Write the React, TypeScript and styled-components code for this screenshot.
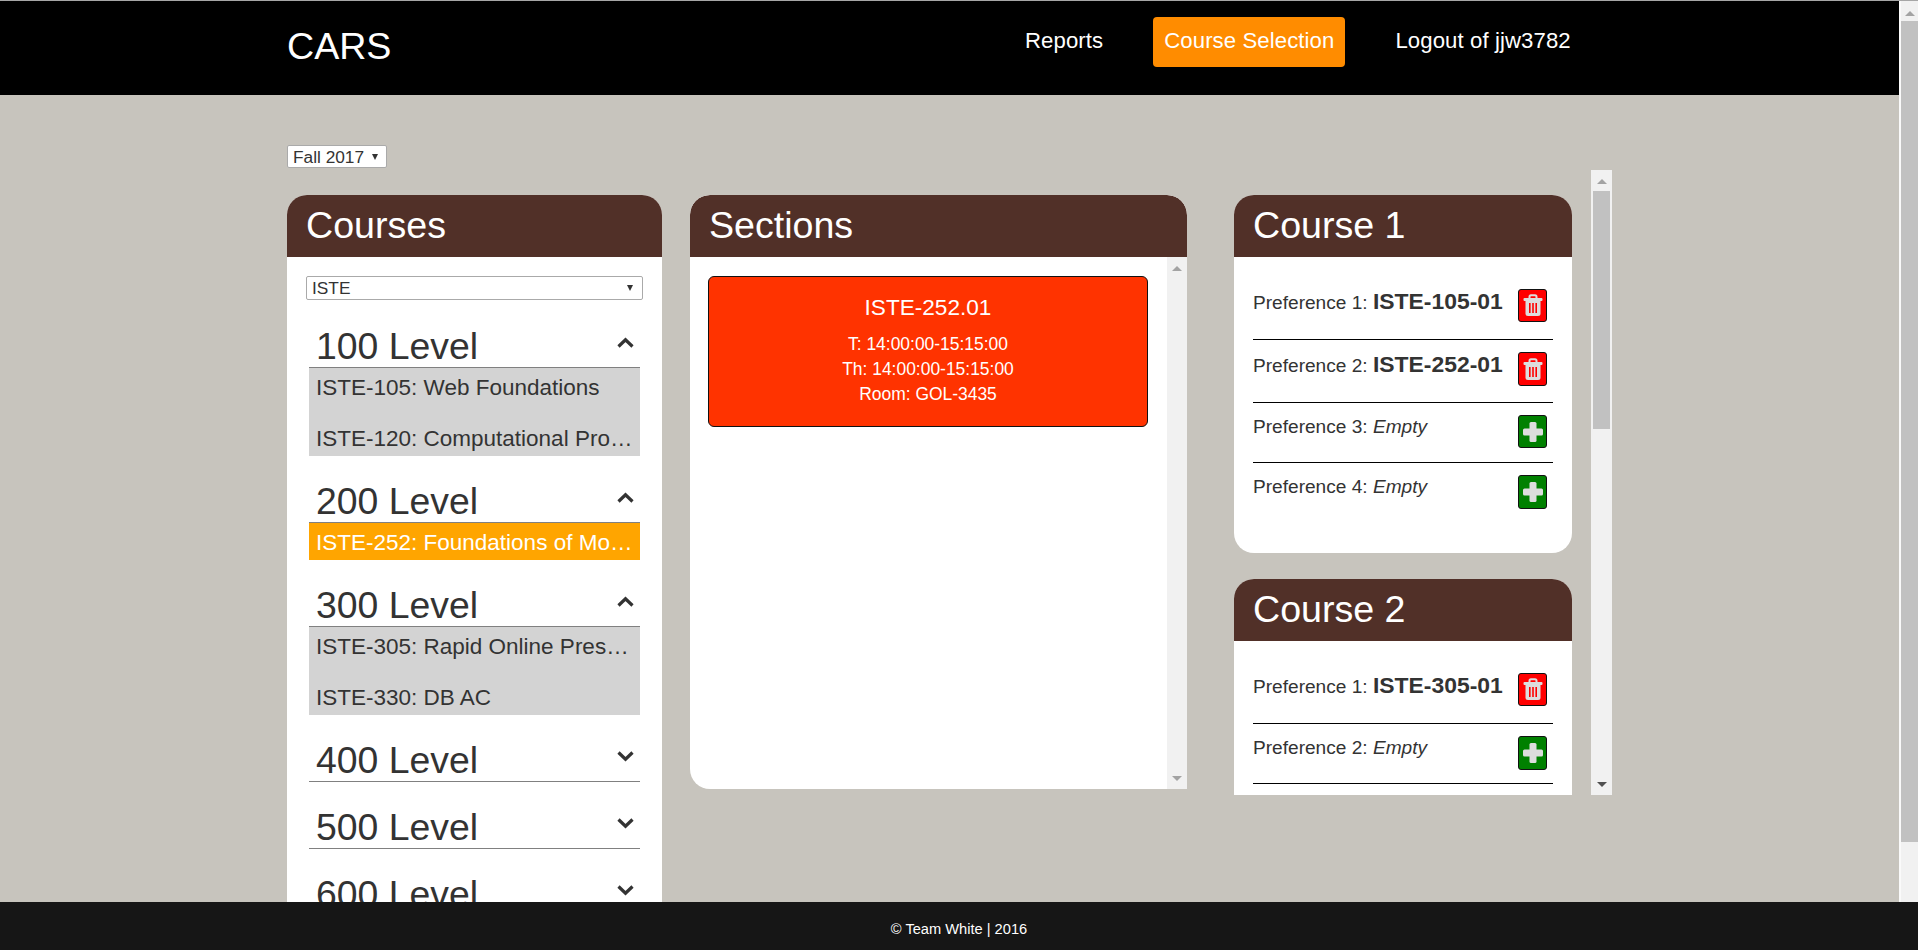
import React from "react";
import styled, { createGlobalStyle } from "styled-components";

const Global = createGlobalStyle`
  html, body { margin: 0; padding: 0; height: 100%; overflow: hidden; background: #c7c4bd; }
  * { box-sizing: border-box; }
  body { font-family: "Liberation Sans", Arial, sans-serif; color: #333; }
`;

const Frame = styled.div`
  height: 950px;
  overflow: hidden;
  display: flex;
  border-top: 1px solid #a6a6a6;
  background: #c7c4bd;
`;
const Main = styled.div`
  flex: 1;
  min-width: 0;
  display: flex;
  flex-direction: column;
`;
const Header = styled.header`
  height: 94px;
  flex: none;
  background: #000;
  color: #fff;
  display: flex;
  align-items: flex-start;
  padding-left: 287px;
`;
const Brand = styled.div`
  width: 727px;
  font-size: 37.6px;
  line-height: 42px;
  padding-top: 24px;
`;
const Nav = styled.nav`
  display: flex;
  gap: 39px;
  padding-top: 16px;
`;
const NavItem = styled.a<{ $active?: boolean }>`
  height: 50px;
  padding: 11px 11px 0;
  font-size: 22.15px;
  line-height: 26px;
  letter-spacing: 0.1px;
  border-radius: 4px;
  color: #fff;
  background: ${(p) => (p.$active ? "#ff8c00" : "transparent")};
`;
const Content = styled.main`
  flex: 1;
  min-height: 0;
  padding: 50px 0 0 287px;
  display: grid;
  grid-template-columns: 375px 497px 397px;
  column-gap: 28px;
  grid-template-rows: 25px 25px 1fr;
  justify-content: start;
`;
const TermRow = styled.div`
  grid-column: 1 / 3;
  grid-row: 1;
`;
const Picker = styled.div<{ $wide?: boolean }>`
  position: relative;
  width: ${(p) => (p.$wide ? "337px" : "100px")};
  height: ${(p) => (p.$wide ? "24px" : "23px")};
  padding-left: 5px;
  background: #fff;
  border: 1px solid #aaa;
  border-radius: 2px;
  font-size: 17.3px;
  line-height: 23px;
  color: #333;
  &::after {
    content: "";
    position: absolute;
    right: ${(p) => (p.$wide ? "9px" : "8px")};
    top: 8px;
    border-left: 3.5px solid transparent;
    border-right: 3.5px solid transparent;
    border-top: 6px solid #333;
  }
`;
const CoursesPanel = styled.section`
  grid-column: 1;
  grid-row: 3;
  background: #fff;
  border-radius: 20px 20px 0 0;
  min-height: 900px;
`;
const SectionsPanel = styled.section`
  grid-column: 2;
  grid-row: 3;
  height: 594px;
  display: flex;
  flex-direction: column;
  background: #fff;
  border-radius: 20px 20px 0 20px;
  overflow: hidden;
`;
const PanelTitle = styled.h2`
  margin: 0;
  height: 62px;
  flex: none;
  background: #513028;
  color: #fff;
  font-size: 37.6px;
  font-weight: 400;
  line-height: 61px;
  padding-left: 19px;
  border-radius: 20px 20px 0 0;
`;
const CoursesBody = styled.div`
  padding: 19px 19px 0;
`;
const LevelList = styled.div`
  padding: 1px 3px 0 3px;
`;
const LevelHead = styled.div`
  height: 67px;
  display: flex;
  justify-content: space-between;
  align-items: flex-end;
  border-bottom: 1px solid #808080;
  padding: 0 6px 0 7px;
  font-size: 37.4px;
  line-height: 41px;
  color: #333;
`;
const Chevron = styled.svg`
  width: 17px;
  height: 11px;
  align-self: flex-start;
  margin-top: 36px;
  fill: none;
  stroke: #333;
  stroke-width: 3.2;
`;
const Items = styled.div`
  display: flex;
  flex-direction: column;
  gap: 14px;
  background: #d3d3d3;
`;
const Item = styled.div<{ $selected?: boolean }>`
  height: 37px;
  padding: 0 7px;
  font-size: 22.5px;
  line-height: 39px;
  white-space: nowrap;
  overflow: hidden;
  text-overflow: ellipsis;
  background: ${(p) => (p.$selected ? "#ffa500" : "#d3d3d3")};
  color: ${(p) => (p.$selected ? "#fff" : "#333")};
`;
const SectionsBody = styled.div`
  flex: 1;
  min-height: 0;
  display: flex;
`;
const SectionList = styled.div`
  flex: 1;
  padding: 19px 19px 0 18px;
`;
const SectionCard = styled.div`
  height: 151px;
  background: #ff3300;
  border: 1px solid #111;
  border-radius: 6px;
  color: #fff;
  text-align: center;
  padding-top: 18px;
`;
const SectionName = styled.div`
  font-size: 22.6px;
  line-height: 26px;
  margin-bottom: 11px;
`;
const SectionLine = styled.div`
  font-size: 17.45px;
  line-height: 25px;
`;
const RightColumn = styled.div`
  grid-column: 3;
  grid-row: 2 / 4;
  height: 625px;
  padding-left: 19px;
  display: flex;
  justify-content: space-between;
  overflow: hidden;
`;
const CourseStack = styled.div`
  width: 338px;
  padding-top: 25px;
  display: flex;
  flex-direction: column;
  gap: 26px;
`;
const CourseCard = styled.section`
  flex: none;
  background: #fff;
  border-radius: 20px;
`;
const CourseBody = styled.div`
  padding: 20px 19px 30px;
`;
const PrefRow = styled.div<{ $filled?: boolean; $last?: boolean }>`
  height: ${(p) => (p.$filled ? "63px" : "60px")};
  display: flex;
  justify-content: space-between;
  align-items: flex-start;
  padding: 12px 6px 0 0;
  border-bottom: ${(p) => (p.$last ? "none" : "1px solid #000")};
`;
const PrefLabel = styled.div<{ $filled?: boolean }>`
  font-size: 19.1px;
  line-height: ${(p) => (p.$filled ? "27px" : "24px")};
  color: #333;
  white-space: nowrap;
`;
const PrefCode = styled.strong`
  font-size: 22.9px;
  font-weight: 700;
  line-height: 24px;
`;
const PrefEmpty = styled.em`
  font-style: italic;
`;
const ActionButton = styled.button<{ $kind: "remove" | "add"; $tall?: boolean }>`
  width: 29px;
  height: ${(p) => (p.$tall ? "34px" : "33px")};
  padding: 0;
  flex: none;
  display: flex;
  align-items: center;
  justify-content: center;
  border: 1px solid #111;
  border-radius: 3px;
  background: ${(p) => (p.$kind === "remove" ? "#ff0000" : "#008000")};
`;
const Track = styled.div<{ $width: number; $pad: number }>`
  flex: none;
  position: relative;
  width: ${(p) => p.$width}px;
  padding: 0 ${(p) => p.$pad}px;
  background: #f1f1f1;
`;
const PageTrack = styled(Track)`
  height: 950px;
  border-left: 2px solid #fafafa;
`;
const Thumb = styled.div`
  background: #c1c1c1;
`;
const ArrowUp = styled.span<{ $top: number }>`
  position: absolute;
  top: ${(p) => p.$top}px;
  left: 50%;
  margin-left: -5px;
  border-left: 5px solid transparent;
  border-right: 5px solid transparent;
  border-bottom: 5px solid #a3a3a3;
`;
const ArrowDown = styled.span<{ $dark?: boolean }>`
  position: absolute;
  bottom: 8px;
  left: 50%;
  margin-left: -5px;
  border-left: 5px solid transparent;
  border-right: 5px solid transparent;
  border-top: 5px solid ${(p) => (p.$dark ? "#505050" : "#a3a3a3")};
`;
const Footer = styled.footer`
  position: fixed;
  left: 0;
  right: 0;
  bottom: 0;
  height: 48px;
  background: #161616;
  color: #fff;
  font-size: 14.65px;
  text-align: center;
  line-height: 54px;
`;

const Up = () => (
  <Chevron viewBox="0 0 17 11">
    <polyline points="1.5,9.5 8.5,2.8 15.5,9.5" />
  </Chevron>
);
const Down = () => (
  <Chevron viewBox="0 0 17 11">
    <polyline points="1.5,1.5 8.5,8.2 15.5,1.5" />
  </Chevron>
);

const TrashIcon = () => (
  <svg width="20" height="23" viewBox="0 0 20 23">
    <path d="M6.5 4.5V2.8Q6.5 1.3 8 1.3H12Q13.5 1.3 13.5 2.8V4.5" fill="none" stroke="#ddd" strokeWidth="2" />
    <rect x="0.5" y="4" width="19" height="3" rx="1" fill="#ddd" />
    <path d="M2.5 7H17.5V19.5Q17.5 22 15 22H5Q2.5 22 2.5 19.5Z" fill="#ddd" />
    <rect x="6" y="9" width="1.6" height="10" fill="#ff0000" />
    <rect x="9.2" y="9" width="1.6" height="10" fill="#ff0000" />
    <rect x="12.4" y="9" width="1.6" height="10" fill="#ff0000" />
  </svg>
);
const PlusIcon = () => (
  <svg width="20" height="20" viewBox="0 0 20 20">
    <rect x="0" y="6.5" width="20" height="7" rx="1.5" fill="#ddd" />
    <rect x="6.5" y="0" width="7" height="20" rx="1.5" fill="#ddd" />
  </svg>
);

type Level = { name: string; open: boolean; items: { text: string; selected?: boolean }[] };
const levels: Level[] = [
  { name: "100 Level", open: true, items: [{ text: "ISTE-105: Web Foundations" }, { text: "ISTE-120: Computational Problem Solving" }] },
  { name: "200 Level", open: true, items: [{ text: "ISTE-252: Foundations of Mobile Design", selected: true }] },
  { name: "300 Level", open: true, items: [{ text: "ISTE-305: Rapid Online Presence Development" }, { text: "ISTE-330: DB AC" }] },
  { name: "400 Level", open: false, items: [] },
  { name: "500 Level", open: false, items: [] },
  { name: "600 Level", open: false, items: [] },
];

type Pref = { n: number; code?: string; tall?: boolean };
const Row = ({ pref, last }: { pref: Pref; last?: boolean }) => (
  <PrefRow $filled={!!pref.code} $last={last}>
    <PrefLabel $filled={!!pref.code}>
      Preference {pref.n}: {pref.code ? <PrefCode>{pref.code}</PrefCode> : <PrefEmpty>Empty</PrefEmpty>}
    </PrefLabel>
    <ActionButton $kind={pref.code ? "remove" : "add"} $tall={pref.tall}>
      {pref.code ? <TrashIcon /> : <PlusIcon />}
    </ActionButton>
  </PrefRow>
);

export default function App() {
  return (
    <>
      <Global />
      <Frame>
        <Main>
          <Header>
            <Brand>CARS</Brand>
            <Nav>
              <NavItem>Reports</NavItem>
              <NavItem $active>Course Selection</NavItem>
              <NavItem>Logout of jjw3782</NavItem>
            </Nav>
          </Header>
          <Content>
            <TermRow>
              <Picker>Fall 2017</Picker>
            </TermRow>
            <CoursesPanel>
              <PanelTitle>Courses</PanelTitle>
              <CoursesBody>
                <Picker $wide>ISTE</Picker>
                <LevelList>
                  {levels.map((l) => (
                    <div key={l.name}>
                      <LevelHead>
                        {l.name}
                        {l.open ? <Up /> : <Down />}
                      </LevelHead>
                      {l.open && (
                        <Items>
                          {l.items.map((i) => (
                            <Item key={i.text} $selected={i.selected}>
                              {i.text}
                            </Item>
                          ))}
                        </Items>
                      )}
                    </div>
                  ))}
                </LevelList>
              </CoursesBody>
            </CoursesPanel>
            <SectionsPanel>
              <PanelTitle>Sections</PanelTitle>
              <SectionsBody>
                <SectionList>
                  <SectionCard>
                    <SectionName>ISTE-252.01</SectionName>
                    <SectionLine>T: 14:00:00-15:15:00</SectionLine>
                    <SectionLine>Th: 14:00:00-15:15:00</SectionLine>
                    <SectionLine>Room: GOL-3435</SectionLine>
                  </SectionCard>
                </SectionList>
                <Track $width={20} $pad={0}>
                  <ArrowUp $top={9} />
                  <ArrowDown />
                </Track>
              </SectionsBody>
            </SectionsPanel>
            <RightColumn>
              <CourseStack>
                <CourseCard>
                  <PanelTitle>Course 1</PanelTitle>
                  <CourseBody>
                    <Row pref={{ n: 1, code: "ISTE-105-01" }} />
                    <Row pref={{ n: 2, code: "ISTE-252-01", tall: true }} />
                    <Row pref={{ n: 3 }} />
                    <Row pref={{ n: 4, tall: true }} last />
                  </CourseBody>
                </CourseCard>
                <CourseCard>
                  <PanelTitle>Course 2</PanelTitle>
                  <CourseBody>
                    <Row pref={{ n: 1, code: "ISTE-305-01" }} />
                    <Row pref={{ n: 2, tall: true }} />
                  </CourseBody>
                </CourseCard>
              </CourseStack>
              <Track $width={21} $pad={2}>
                <ArrowUp $top={9} />
                <Thumb style={{ marginTop: 21, height: 238 }} />
                <ArrowDown $dark />
              </Track>
            </RightColumn>
          </Content>
        </Main>
        <PageTrack $width={19} $pad={0}>
          <ArrowUp $top={10} />
          <Thumb style={{ marginTop: 20, height: 821 }} />
        </PageTrack>
      </Frame>
      <Footer>© Team White | 2016</Footer>
    </>
  );
}
